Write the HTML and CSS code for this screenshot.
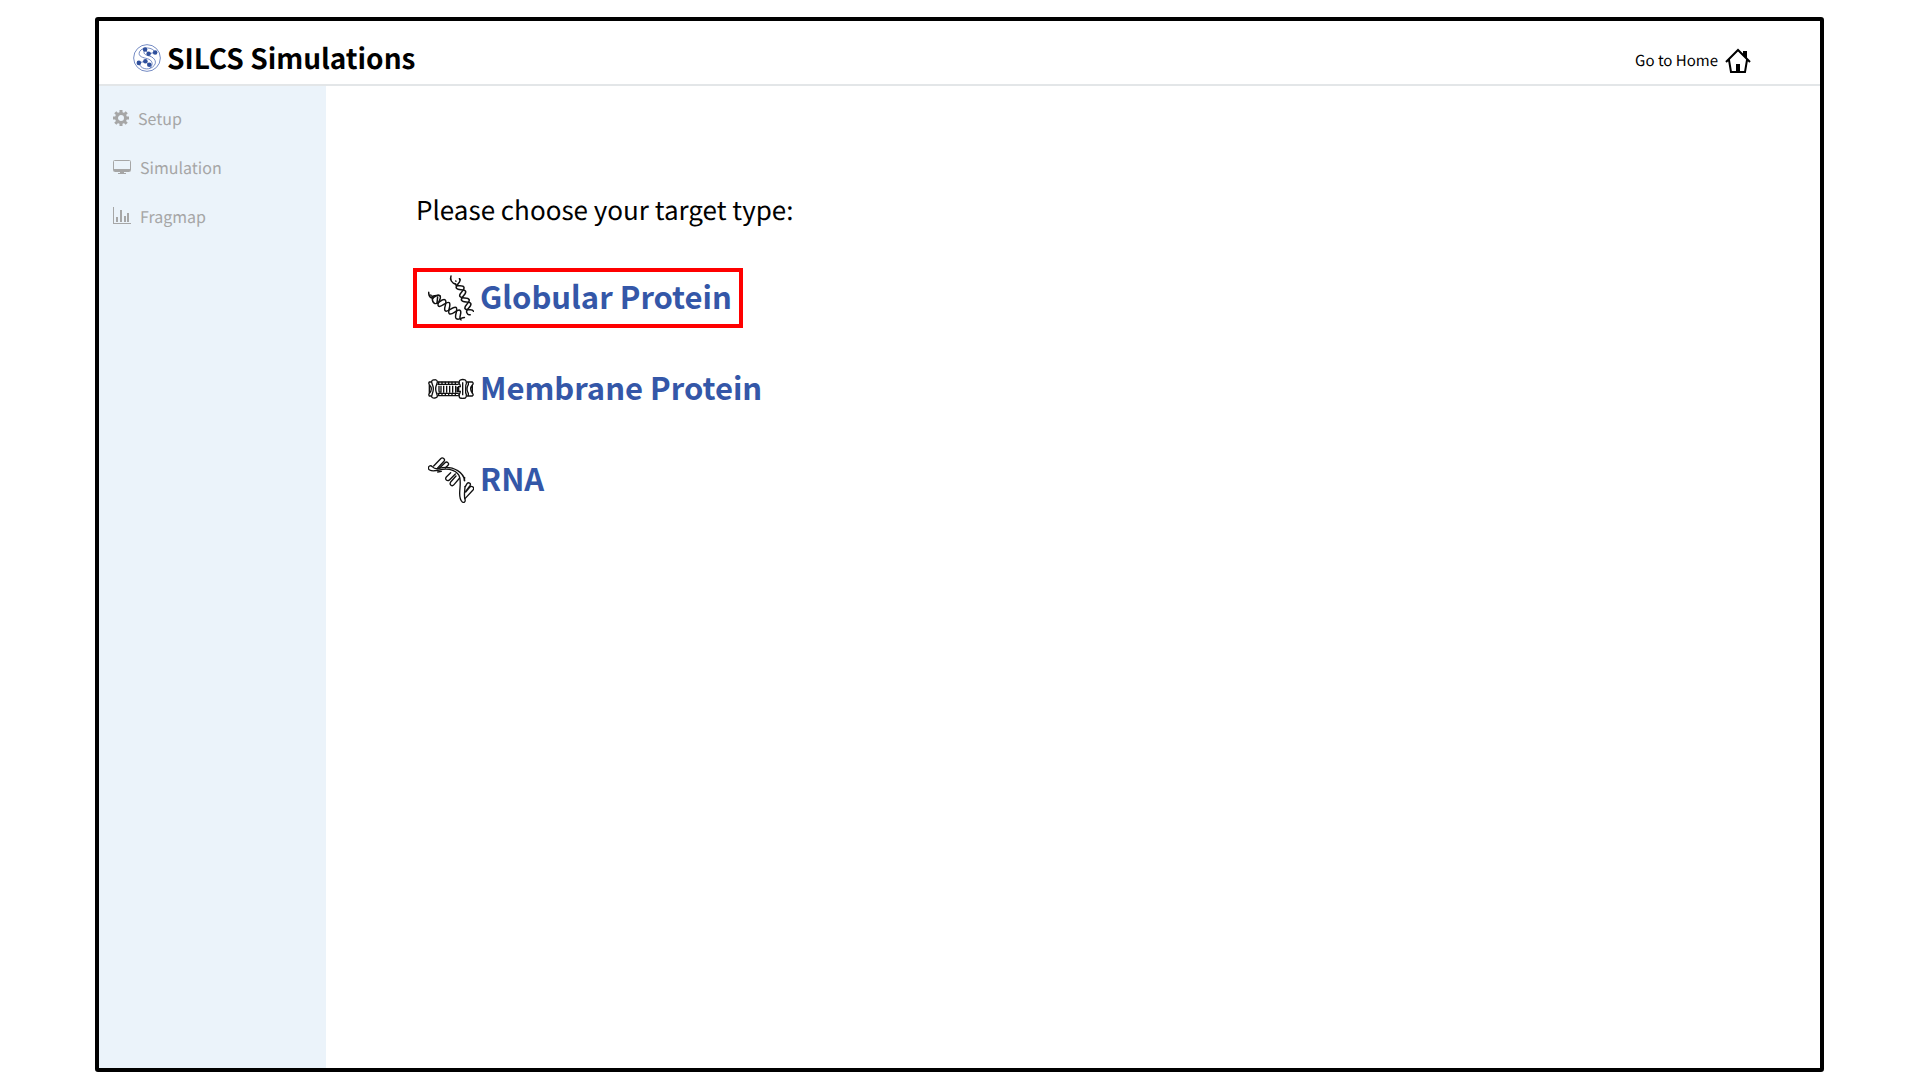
FILE: index.html
```html
<!DOCTYPE html>
<html lang="en">
<head>
<meta charset="utf-8">
<meta name="viewport" content="width=device-width, initial-scale=1">
<title>SILCS Simulations</title>
<link rel="stylesheet" href="styles.css">
</head>
<body>
<div class="window">
  <header class="header">
    <div class="brand">
      <svg class="brand-logo" viewBox="22 16 86 86" aria-hidden="true">
        <g fill="none" stroke="#5570b5" stroke-width="2.5">
          <circle cx="65" cy="59" r="41"/>
          <path d="M90 42C84 25 50 23 42 40C36 55 54 58 66 61C81 65 86 78 74 90"/>
          <path d="M40 74C44 92 66 98 82 87C99 74 89 58 73 53C61 50 50 46 59 33"/>
          <path d="M59 33L70 46L90 42M40 74L60 69L72 80"/>
        </g>
        <g fill="#2f4f9b"><circle cx="59" cy="33" r="7"/><circle cx="70" cy="46" r="7"/><circle cx="90" cy="42" r="7"/><circle cx="40" cy="74" r="7"/><circle cx="60" cy="69" r="7"/><circle cx="72" cy="80" r="7"/></g>
      </svg>
      <h1 class="brand-title">SILCS Simulations</h1>
    </div>
    <a class="home-link" href="#home">
      <span>Go to Home</span>
      <svg class="home-icon" viewBox="0 0 26 26" aria-hidden="true">
        <path d="M1 14L13 2L25 14M4 12L6 24H20L22 12" fill="none" stroke="#000" stroke-width="2"/>
        <path d="M11 24V16H15V24ZM18 3H22V11L18 7Z"/>
      </svg>
    </a>
  </header>
  <div class="body">
    <nav class="sidebar" aria-label="Steps">
      <a class="step" href="#setup">
        <svg class="step-icon step-icon-small" viewBox="0 0 16 16" aria-hidden="true">
          <circle cx="8" cy="8" r="4.5" fill="none" stroke="currentColor" stroke-width="3"/>
          <path d="M8 0V3M8 13V16M0 8H3M13 8H16M2.300 2.300L4.500 4.500M11.500 11.500L13.700 13.700M2.300 13.700L4.500 11.500M11.500 4.500L13.700 2.300" stroke="currentColor" stroke-width="3"/>
        </svg>
        <span>Setup</span>
      </a>
      <a class="step" href="#simulation">
        <svg class="step-icon" viewBox="0 0 18 16" aria-hidden="true">
          <rect x=".5" y="1.5" width="17" height="11" rx="1" fill="none" stroke="currentColor"/>
          <path d="M1 10H17V12H1ZM7 12H11V14H13V15H5V14H7Z" fill="currentColor"/>
        </svg>
        <span>Simulation</span>
      </a>
      <a class="step" href="#fragmap">
        <svg class="step-icon" viewBox="0 0 18 18" aria-hidden="true">
          <path d="M0 0H1V16H18V17H0ZM3 10H5V15H3ZM7 3H9V15H7ZM11 9H13V15H11ZM14 6H16V15H14Z" fill="currentColor"/>
        </svg>
        <span>Fragmap</span>
      </a>
    </nav>
    <main class="main">
      <h2 class="prompt">Please choose your target type:</h2>
      <div class="targets">
        <button class="target target-selected" type="button">
          <svg class="target-icon" viewBox="24 21 138 138" aria-hidden="true">
            <g fill="none" stroke="#111" stroke-width="4.500" stroke-linecap="round" stroke-linejoin="round">
              <path d="M26 73C26 84 31 91 40 90"/>
              <g transform="translate(36 85) rotate(35)">
                <path d="M-5 -1C2 6 8 -15 18 -15C29 -15 23 13 33 13S43 -14 53 -14S63 13 73 13S83 -14 93 -14S101 10 112 8"/>
                <path d="M4 4C9 -3 8 -15 18 -15M18 13C29 13 27 -14 38 -14S48 13 58 13S68 -14 78 -14S88 13 98 13S108 2 116 -4M4 4C9 12 11 13 18 13"/>
                <path d="M15 -8L24 8"/>
              </g>
              <path d="M93 24C89 34 95 46 107 48"/>
              <g transform="translate(109 35) rotate(67)">
                <path d="M1 -10C13 -14 13 10 23 10S33 -12 43 -12S53 10 63 10S73 -12 83 -12S93 10 103 10S110 7 113 3"/>
                <path d="M12 8C22 8 20 -12 30 -12S40 10 50 10S60 -12 70 -12S80 10 90 10S97 -12 107 -10"/>
                <path d="M1 -10L5 -10M3 3H4"/>
              </g>
            </g>
          </svg>
          <span class="target-name">Globular Protein</span>
        </button>
        <button class="target" type="button">
          <svg class="target-icon" viewBox="24 18 138 138" aria-hidden="true">
            <g fill="#fff" stroke="#111" stroke-width="4">
              <path d="M52 66H116M52 73H116M52 100H116M52 107H116" fill="none"/>
              <path d="M54 69H116M54 104H116" fill="none" stroke-width="8" stroke-dasharray="4 6"/>
              <path d="M57 77V93Q57 98 63 96V77M71 77V98M80 77V98M89 77V98M98 77V98M107 77V98M112 80V95H119" fill="none"/>
              <path d="M42 60C46 58 52 60 52 66C52 72 47 75 47 87S52 102 52 108C52 115 38 116 35 111C34 105 40 99 40 87S34 71 35 64Q37 59 42 60Z"/>
              <path d="M121 60Q128 57 136 60Q140 63 139 71Q136 75 137 87Q136 99 139 104Q140 111 136 114Q128 116 120 114Q116 110 118 103Q121 98 121 94H116V80H121Q121 74 118 71Q116 63 121 60Z"/>
              <path d="M128 67V106" fill="none"/>
              <path d="M35 66H28Q25 70 28 74Q34 80 34 87T28 100Q25 104 28 108H35M28 74V100M140 66H145V74Q141 80 141 87T145 100V108H140M146 66H157Q162 70 157 75Q152 80 152 87T157 100Q162 105 157 108H146M157 75V99" fill="none"/>
            </g>
          </svg>
          <span class="target-name">Membrane Protein</span>
        </button>
        <button class="target" type="button">
          <svg class="target-icon" viewBox="24 21 138 138" aria-hidden="true">
            <g fill="none" stroke="#111" stroke-width="4" stroke-linecap="round" stroke-linejoin="round">
              <path d="M41 48L62 26C68 20 77 28 72 34L53 54M59 54L75 38C81 33 89 40 84 46L76 54M92 68L79 81C73 88 82 96 89 89L106 72M108 78L92 96C87 104 96 111 102 104L119 84M136 110L141 101C146 95 154 101 150 107L137 124M137 126L149 112C156 105 165 113 159 120L135 146"/>
              <path d="M29 48C24 50 24 57 29 60C39 66 52 61 68 58C86 56 104 61 114 72C126 84 119 111 119 130C119 142 122 152 127 156C133 160 137 154 135 148C131 137 135 121 135 109M134 92C132 78 126 70 113 62C91 48 71 51 56 55C44 58 40 53 37 50Q33 46 29 48"/>
              <path d="M53 66L64 64M134 82L133 92"/>
            </g>
          </svg>
          <span class="target-name">RNA</span>
        </button>
      </div>
    </main>
  </div>
</div>
</body>
</html>
```
FILE: styles.css
```css
* {
  box-sizing: border-box;
}

body {
  margin: 0;
  padding: 17px 96px 8px 95px;
  background: #fff;
  color: #000;
  font-family: "Noto Sans CJK SC", "Noto Sans", sans-serif;
  font-size: 16px;
  line-height: 24px;
  text-rendering: geometricPrecision;
}

.window {
  display: flex;
  flex-direction: column;
  min-height: calc(100vh - 25px);
  border: 4px solid #000;
  border-radius: 3px;
}

.header {
  display: flex;
  align-items: center;
  justify-content: space-between;
  height: 65px;
  padding: 10px 69px 0 34px;
  border-bottom: 2px solid #e3e6e8;
}

.brand {
  display: flex;
  align-items: center;
  gap: 6px;
}

.brand-logo {
  width: 28px;
  height: 28px;
}

.brand-title {
  margin: 0;
  font-size: 28px;
  line-height: 32px;
  font-weight: 700;
}

.home-link {
  display: flex;
  align-items: center;
  gap: 7px;
  padding-top: 7px;
  color: inherit;
  font-size: 15px;
  text-decoration: none;
}

.home-icon {
  width: 26px;
  height: 26px;
}

.body {
  display: flex;
  flex: 1;
}

.sidebar {
  display: flex;
  flex-direction: column;
  gap: 25px;
  width: 227px;
  padding: 20px 14px;
  background: #ebf3fa;
}

.step {
  display: flex;
  align-items: center;
  gap: 9px;
  color: #a6a6a6;
  text-decoration: none;
}

.step-icon {
  width: 18px;
  height: 18px;
}

.step-icon-small {
  width: 16px;
  height: 16px;
}

.main {
  flex: 1;
  padding: 104px 87px;
}

.prompt {
  margin: 0 3px;
  font-size: 26px;
  line-height: 40px;
  font-weight: 400;
}

.targets {
  display: flex;
  flex-direction: column;
  align-items: flex-start;
  gap: 31px;
  margin-top: 38px;
}

.target {
  display: flex;
  align-items: center;
  gap: 6px;
  height: 60px;
  padding: 0 7px 0 11px;
  border: 4px solid transparent;
  background: none;
  color: #3457a8;
  font-family: inherit;
  font-size: 31px;
  line-height: 40px;
  font-weight: 700;
  cursor: pointer;
}

.target-name {
  padding-bottom: 4px;
}

.target-selected {
  border-color: #f00;
}

.target-icon {
  width: 46px;
  height: 46px;
}
```
